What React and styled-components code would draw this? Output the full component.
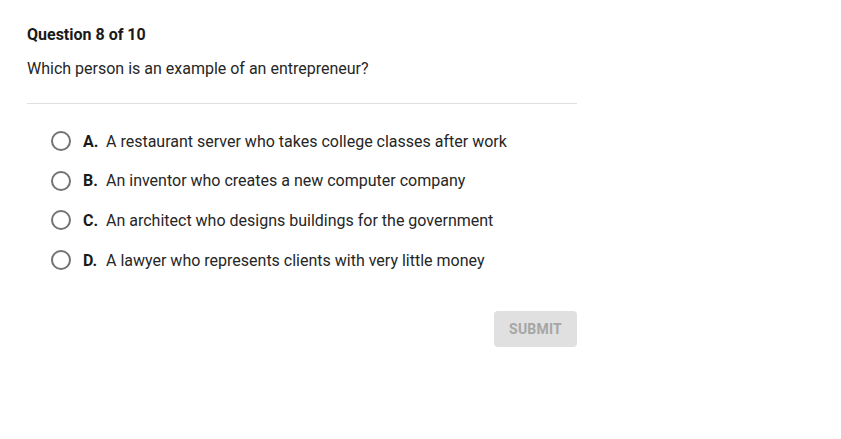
import React, { useState } from "react";
import styled, { createGlobalStyle } from "styled-components";

const Global = createGlobalStyle`
  body {
    margin: 0;
    background: #fff;
    font-family: Roboto, "Liberation Sans", Arial, sans-serif;
    color: #212121;
  }
`;

const Page = styled.div`
  width: 550px;
  padding: 25px 0 0 27px;
`;

const Title = styled.h2`
  margin: 0;
  font-size: 16px;
  font-weight: 700;
  line-height: 20px;
  color: #1a1a1a;
`;

const Prompt = styled.p`
  margin: 14px 0 0;
  font-size: 16px;
  line-height: 20px;
  color: #262626;
`;

const Divider = styled.hr`
  margin: 24px 0 0;
  border: none;
  border-top: 1px solid #e0e0e0;
`;

const Options = styled.div`
  display: flex;
  flex-direction: column;
  gap: 19.7px;
  padding: 27px 0 0 24px;
`;

const Option = styled.label`
  display: flex;
  align-items: center;
  height: 20px;
  cursor: pointer;
  font-size: 16px;
  color: #262626;
`;

const Radio = styled.span`
  box-sizing: border-box;
  width: 20px;
  height: 20px;
  border-radius: 50%;
  border: 2px solid #737373;
  margin-right: 12px;
  display: flex;
  align-items: center;
  justify-content: center;
  &::after {
    content: "";
    width: 10px;
    height: 10px;
    border-radius: 50%;
    background: ${({ checked }) => (checked ? "#737373" : "transparent")};
  }
`;

const Letter = styled.span`
  font-weight: 700;
  width: 23px;
  color: #1a1a1a;
`;

const Footer = styled.div`
  display: flex;
  justify-content: flex-end;
  padding-top: 41px;
`;

const Submit = styled.button`
  width: 83px;
  height: 36px;
  border: none;
  border-radius: 4px;
  background: #e0e0e0;
  color: #a6a6a6;
  font-family: inherit;
  font-size: 14px;
  font-weight: 700;
  letter-spacing: 0.2px;
`;

const answers = [
  ["A.", "A restaurant server who takes college classes after work"],
  ["B.", "An inventor who creates a new computer company"],
  ["C.", "An architect who designs buildings for the government"],
  ["D.", "A lawyer who represents clients with very little money"],
];

export default function App() {
  const [picked, setPicked] = useState(null);
  return (
    <Page>
      <Global />
      <Title>Question 8 of 10</Title>
      <Prompt>Which person is an example of an entrepreneur?</Prompt>
      <Divider />
      <Options>
        {answers.map(([l, t]) => (
          <Option key={l} onClick={() => setPicked(l)}>
            <Radio checked={picked === l} />
            <Letter>{l}</Letter>
            {t}
          </Option>
        ))}
      </Options>
      <Footer>
        <Submit disabled={!picked}>SUBMIT</Submit>
      </Footer>
    </Page>
  );
}
